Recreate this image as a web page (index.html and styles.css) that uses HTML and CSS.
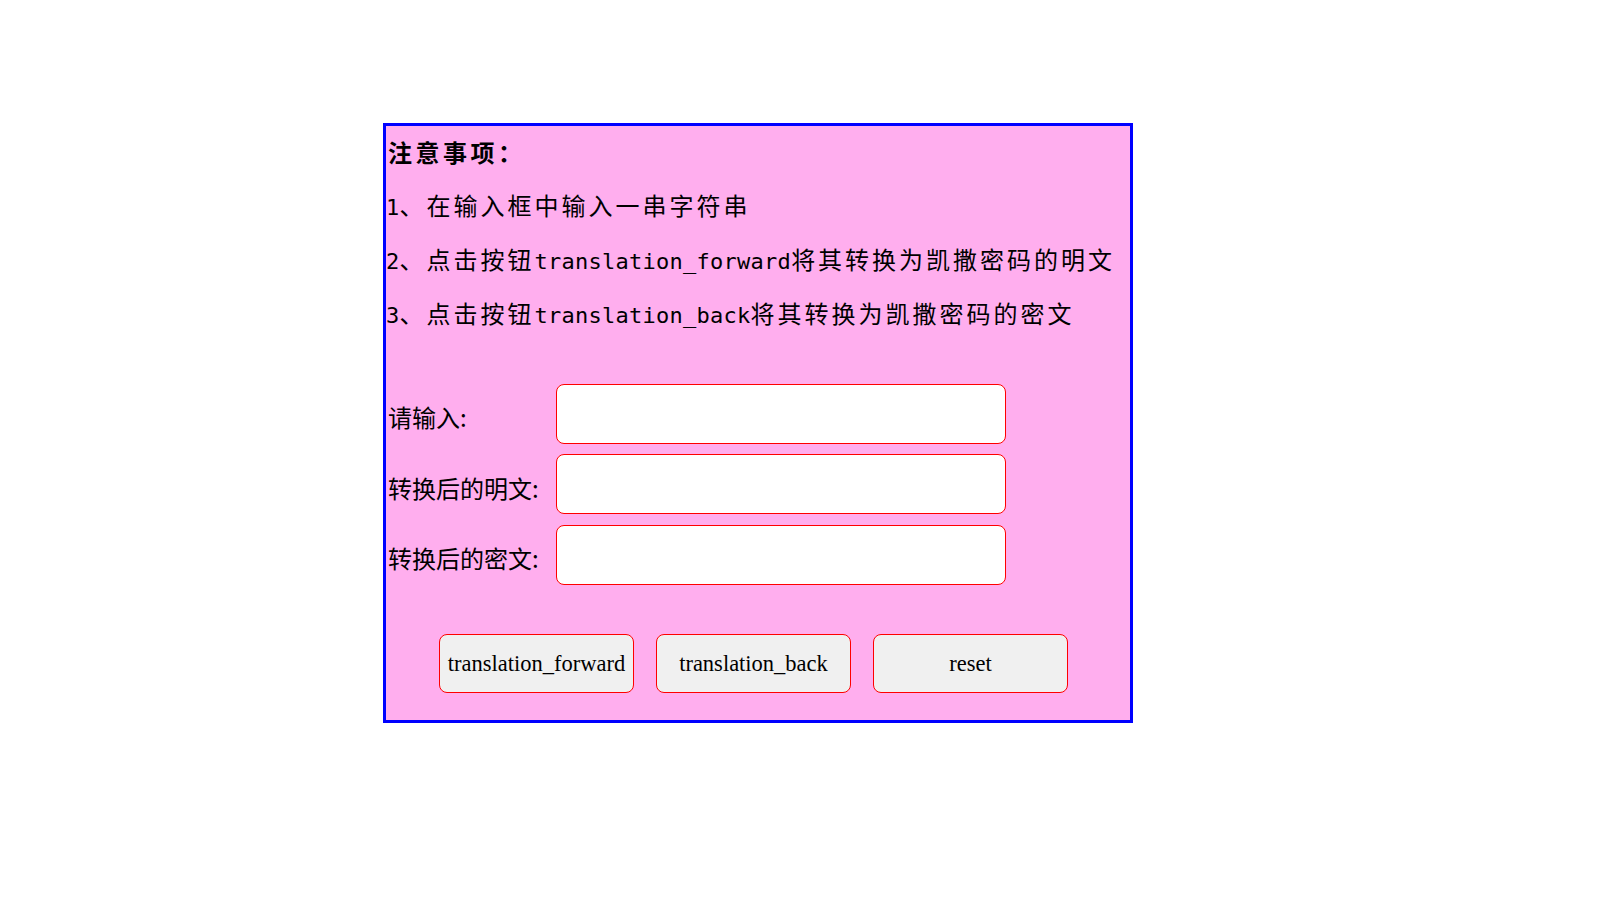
FILE: index.html
```html
<!DOCTYPE html>
<html lang="zh-CN">
<head>
<meta charset="utf-8">
<title>凯撒密码</title>
<link rel="stylesheet" href="styles.css">
</head>
<body>
<div class="page">
  <div class="panel">
    <h3 class="title">注意事项：</h3>
    <ul class="notes">
      <li><span class="lat">1</span>、在输入框中输入一串字符串</li>
      <li><span class="lat">2</span>、点击按钮<span class="lat">translation_forward</span>将其转换为凯撒密码的明文</li>
      <li><span class="lat">3</span>、点击按钮<span class="lat">translation_back</span>将其转换为凯撒密码的密文</li>
    </ul>
    <div class="form">
      <label class="label" for="in">请输入:</label>
      <input class="field" id="in" type="text">
      <label class="label" for="plain">转换后的明文:</label>
      <input class="field" id="plain" type="text">
      <label class="label" for="cipher">转换后的密文:</label>
      <input class="field" id="cipher" type="text">
    </div>
    <div class="actions">
      <button class="btn" type="button">translation_forward</button>
      <button class="btn" type="button">translation_back</button>
      <button class="btn" type="button">reset</button>
    </div>
  </div>
</div>
</body>
</html>
```

FILE: styles.css
```css
html, body {
  margin: 0;
  padding: 0;
  background: #ffffff;
}

.page {
  padding: 123px 0 0 383px;
}

.panel {
  width: 744px;
  height: 594px;
  border: 3px solid #0000ff;
  background: #ffaeee;
  color: #000000;
}

.title {
  margin: 0;
  height: 52px;
  line-height: 52px;
  font-family: "Noto Sans CJK SC", sans-serif;
  font-size: 24px;
  font-weight: 700;
  letter-spacing: 3.5px;
  padding-left: 2px;
}

.notes {
  list-style: none;
  margin: 0;
  padding: 0;
}

.notes li {
  height: 54px;
  line-height: 54px;
  font-family: "Noto Sans CJK SC", sans-serif;
  font-size: 24px;
  letter-spacing: 3px;
  white-space: nowrap;
}

.lat {
  font-family: "DejaVu Sans Mono", monospace;
  font-size: 22px;
  letter-spacing: 0.26px;
}

.form {
  margin-top: 43.5px;
  display: grid;
  grid-template-columns: 170px 450px;
  row-gap: 10.5px;
  align-items: center;
}

.label {
  font-family: "Noto Sans CJK SC", sans-serif;
  font-size: 24px;
  line-height: 30px;
  padding-top: 7px;
  padding-left: 2px;
  white-space: nowrap;
}

.field {
  box-sizing: border-box;
  width: 450px;
  height: 60px;
  margin: 0;
  border: 1px solid #ff0000;
  border-radius: 8px;
  background: #ffffff;
  outline: none;
  padding: 0 8px;
  font-size: 18px;
}

.actions {
  margin-top: 49px;
  padding-left: 53px;
  display: flex;
  gap: 22px;
}

.btn {
  box-sizing: border-box;
  width: 195px;
  height: 59px;
  margin: 0;
  padding: 2px 0 0;
  border: 1px solid #ff0000;
  border-radius: 8px;
  background: #f0f0f0;
  color: #000000;
  font-family: "Liberation Serif", "Times New Roman", serif;
  font-size: 22.5px;
}
```
